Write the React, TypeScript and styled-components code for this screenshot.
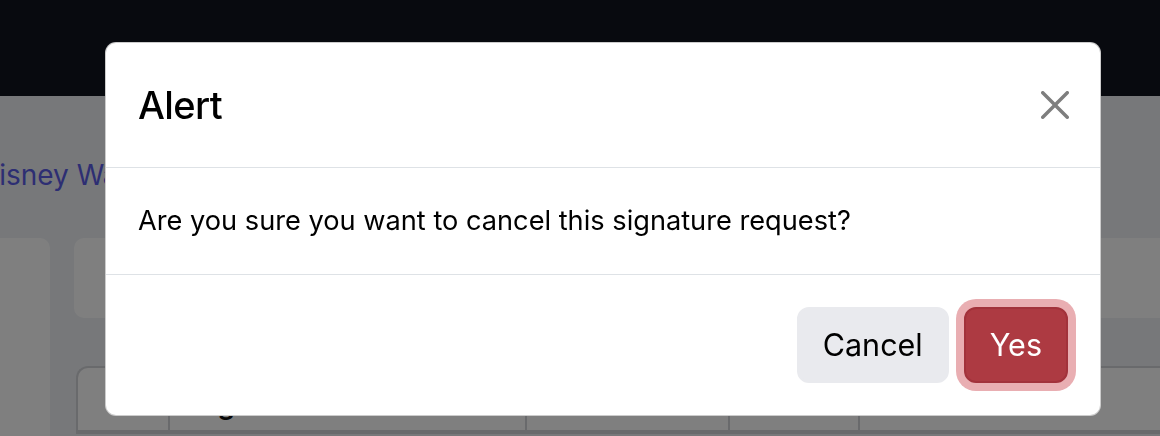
import React from "react";
import styled, { createGlobalStyle } from "styled-components";

const GlobalStyle = createGlobalStyle`
  html, body { margin: 0; padding: 0; }
  body {
    font-family: Inter, "Noto Sans", "Liberation Sans", sans-serif;
    background: #eef0f5;
    overflow: hidden;
  }
  * { box-sizing: border-box; }
`;

const Page = styled.div`
  width: 1160px;
  height: 436px;
  overflow: hidden;
  background: #eef0f5;
`;

const NavBar = styled.header`
  height: 96px;
  background: #10141f;
`;

const Content = styled.main`
  display: flex;
  flex-direction: column;
`;

const Crumb = styled.a`
  display: block;
  margin: 59px 0 0 -21px;
  font-size: 28px;
  line-height: 40px;
  color: #5b5de6;
  text-decoration: none;
  white-space: nowrap;
`;

const Columns = styled.div`
  display: grid;
  grid-template-columns: 60px 1200px;
  gap: 24px;
  margin: 43px 0 0 -10px;
`;

const SideCard = styled.aside`
  background: #ffffff;
  border-radius: 10px;
  height: 300px;
`;

const MainCol = styled.section`
  display: flex;
  flex-direction: column;
  gap: 48px;
`;

const InfoCard = styled.div`
  height: 80px;
  background: #ffffff;
  border-radius: 10px;
`;

const Table = styled.div`
  margin-left: 2px;
  display: grid;
  grid-template-columns: 92px 357px 203px 130px 1fr;
  border: 2px solid #d3d5d9;
  border-right: none;
  border-radius: 12px 0 0 0;
  background: #ffffff;
`;

const HeadCell = styled.div<{ $last?: boolean }>`
  height: 64px;
  padding: 16px 22px 0;
  font-size: 28px;
  line-height: 40px;
  font-weight: 600;
  color: #111;
  border-right: ${(p) => (p.$last ? "none" : "2px solid #d3d5d9")};
  border-bottom: 2px solid #d3d5d9;
  white-space: nowrap;
`;

const Backdrop = styled.div`
  position: fixed;
  inset: 0;
  background: rgba(0, 0, 0, 0.5);
`;

const Dialog = styled.div`
  position: absolute;
  top: 42px;
  left: 105px;
  width: 996px;
  background: #ffffff;
  border: 1px solid rgba(0, 0, 0, 0.2);
  border-radius: 11px;
  display: flex;
  flex-direction: column;
`;

const Header = styled.div`
  display: flex;
  align-items: center;
  justify-content: space-between;
  padding: 32px 31px 32px 32px;
  border-bottom: 1px solid #dee2e6;
`;

const Title = styled.h5`
  margin: 0;
  font-size: 38px;
  line-height: 60px;
  font-weight: 500;
  color: #000;
  letter-spacing: -0.6px;
`;

const CloseButton = styled.button`
  width: 28px;
  height: 28px;
  padding: 0;
  border: none;
  background: transparent;
  opacity: 0.5;
  display: flex;
  cursor: pointer;
`;

const Body = styled.div`
  padding: 32px;
  font-size: 27.2px;
  line-height: 42px;
  color: #000;
  border-bottom: 1px solid #dee2e6;
`;

const Footer = styled.div`
  display: flex;
  justify-content: flex-end;
  gap: 15px;
  padding: 32px 32px 32px;
`;

const Button = styled.button<{ $variant: "secondary" | "danger" }>`
  font-family: inherit;
  font-size: 30.5px;
  line-height: 48px;
  padding: 12px 24px;
  border-radius: 12px;
  border: 2px solid
    ${(p) => (p.$variant === "danger" ? "#a2323b" : "#e9eaee")};
  background: ${(p) => (p.$variant === "danger" ? "#ad3a42" : "#e9eaee")};
  color: ${(p) => (p.$variant === "danger" ? "#ffffff" : "#000000")};
  box-shadow: ${(p) =>
    p.$variant === "danger" ? "0 0 0 8px #e9aeb2" : "none"};
  cursor: pointer;
`;

const CloseIcon = () => (
  <svg width="28" height="28" viewBox="0 0 16 16" fill="#000">
    <path d="M.293.293a1 1 0 0 1 1.414 0L8 6.586 14.293.293a1 1 0 1 1 1.414 1.414L9.414 8l6.293 6.293a1 1 0 0 1-1.414 1.414L8 9.414l-6.293 6.293a1 1 0 0 1-1.414-1.414L6.586 8 .293 1.707a1 1 0 0 1 0-1.414z" />
  </svg>
);

export default function App() {
  return (
    <>
      <GlobalStyle />
      <Page>
        <NavBar />
        <Content>
          <Crumb href="#">Disney Wave Contract</Crumb>
          <Columns>
            <SideCard />
            <MainCol>
              <InfoCard />
              <Table>
                <HeadCell />
                <HeadCell>Signer</HeadCell>
                <HeadCell>Email</HeadCell>
                <HeadCell>Status</HeadCell>
                <HeadCell $last>Action</HeadCell>
              </Table>
            </MainCol>
          </Columns>
        </Content>
      </Page>
      <Backdrop>
        <Dialog role="dialog">
          <Header>
            <Title>Alert</Title>
            <CloseButton aria-label="Close">
              <CloseIcon />
            </CloseButton>
          </Header>
          <Body>Are you sure you want to cancel this signature request?</Body>
          <Footer>
            <Button $variant="secondary">Cancel</Button>
            <Button $variant="danger">Yes</Button>
          </Footer>
        </Dialog>
      </Backdrop>
    </>
  );
}
